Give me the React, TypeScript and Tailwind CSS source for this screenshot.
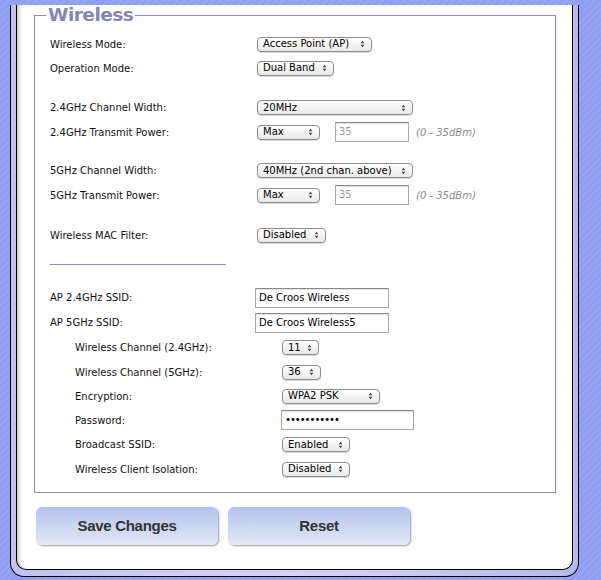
import React from 'react'

// Up/down arrows drawn on the right of a mac-style popup
function Arrows() {
  return (
    <svg width="5" height="8" viewBox="0 0 5 8" className="shrink-0">
      <path d="M2.5 0.8 L0.6 3.2 L4.4 3.2 Z" fill="#444" />
      <path d="M0.6 4.8 L4.4 4.8 L2.5 7.2 Z" fill="#444" />
    </svg>
  )
}

function Sel({ text, w }: { text: string; w: string }) {
  return (
    <div
      className={`flex h-[15px] ${w} shrink-0 items-center justify-between rounded-[4px] border border-[#8c8c8c] bg-gradient-to-b from-white to-[#e9e9e9] pl-[5px] pr-[6px] text-[10px] leading-none text-black shadow-[0_1px_0_#dcdcdc]`}
    >
      <span>{text}</span>
      <Arrows />
    </div>
  )
}

function Field({ value, w, dim, cls = '' }: { value: string; w: string; dim?: boolean; cls?: string }) {
  return (
    <div
      className={`flex h-[20px] ${w} ${cls} shrink-0 items-center border border-[#a8a8a8] border-t-[#8a8a8a] bg-white pl-[3px] text-[10px] leading-none shadow-[inset_0_1px_1px_#e2e2e2] ${dim ? 'text-[#9a9a9a]' : 'text-black'}`}
    >
      {value}
    </div>
  )
}

function Row({ label, h = 'h-[24px]', indent, children }: { label: string; h?: string; indent?: boolean; children: React.ReactNode }) {
  return (
    <div className={`flex ${h} items-center ${indent ? 'pl-[25px]' : ''}`}>
      <div className="w-[207px] shrink-0">{label}</div>
      {children}
    </div>
  )
}

function Power() {
  return (
    <div className="flex items-center">
      <Sel text="Max" w="w-[63px]" />
      <Field value="35" w="w-[74px]" dim cls="ml-[15px]" />
      <span className="ml-[7px] text-[10px] italic text-[#8a8a8a]">(0 - 35dBm)</span>
    </div>
  )
}

export default function App() {
  return (
    <div className="h-[580px] w-[601px] overflow-hidden bg-[#8e9ef0] bg-[repeating-linear-gradient(-45deg,#8e9ef0_0px,#8e9ef0_3px,#97a6f2_3px,#97a6f2_5px)] font-['DejaVu_Sans',sans-serif] text-[10px] text-[#111]">
      {/* Outer frame with lavender bevel */}
      <div className="ml-[10px] h-[572px] w-[569px] rounded-b-[14px] border border-t-0 border-black bg-gradient-to-r from-[#c2c2f2] via-[#d4d4fa] to-[#b8b8ec] px-[5px] pb-[6px]">
        <div className="h-full rounded-b-[10px] border border-t-0 border-black bg-white shadow-[inset_5px_0_4px_-3px_#c4c4c4]">
          <fieldset className="ml-[17px] mr-[16px] mt-[5px] border border-[#8c8cbc] pb-[11px] pl-[15px]">
            <legend className="-ml-[4px] px-[2px] text-[18.5px] font-bold leading-[20px] tracking-[-0.5px] text-[#8585b5]">Wireless</legend>

            <div className="pt-[7px]">
              <Row label="Wireless Mode:">
                <Sel text="Access Point (AP)" w="w-[115px]" />
              </Row>
              <Row label="Operation Mode:">
                <Sel text="Dual Band" w="w-[77px]" />
              </Row>

              <div className="h-[15px]" />
              <Row label="2.4GHz Channel Width:" h="h-[25px]">
                <Sel text="20MHz" w="w-[156px]" />
              </Row>
              <Row label="2.4GHz Transmit Power:">
                <Power />
              </Row>

              <div className="h-[14px]" />
              <Row label="5GHz Channel Width:" h="h-[25px]">
                <Sel text="40MHz (2nd chan. above)" w="w-[156px]" />
              </Row>
              <Row label="5GHz Transmit Power:">
                <Power />
              </Row>

              <div className="h-[16px]" />
              <Row label="Wireless MAC Filter:">
                <Sel text="Disabled" w="w-[69px]" />
              </Row>

              <div className="mt-[17px] h-px w-[176px] bg-[#8c8cbc]" />

              <div className="h-[20px]" />
              <Row label="AP 2.4GHz SSID:" h="h-[25px]">
                <Field value="De Croos Wireless" w="w-[134px]" cls="-ml-[2px]" />
              </Row>
              <Row label="AP 5GHz SSID:" h="h-[25px]">
                <Field value="De Croos Wireless5" w="w-[134px]" cls="-ml-[2px]" />
              </Row>
              <Row label="Wireless Channel (2.4GHz):" h="h-[25px]" indent>
                <Sel text="11" w="w-[37px]" />
              </Row>
              <Row label="Wireless Channel (5GHz):" indent>
                <Sel text="36" w="w-[39px]" />
              </Row>
              <Row label="Encryption:" indent>
                <Sel text="WPA2 PSK" w="w-[98px]" />
              </Row>
              <Row label="Password:" indent>
                <Field value="•••••••••••" w="w-[133px]" cls="-ml-[1px] tracking-[-1px]" />
              </Row>
              <Row label="Broadcast SSID:" h="h-[25px]" indent>
                <Sel text="Enabled" w="w-[68px]" />
              </Row>
              <Row label="Wireless Client Isolation:" indent>
                <Sel text="Disabled" w="w-[68px]" />
              </Row>
            </div>
          </fieldset>

          {/* Action buttons */}
          <div className="ml-[19px] mt-[14px] flex gap-[10px]">
            {['Save Changes', 'Reset'].map((t) => (
              <button
                key={t}
                className="h-[38px] w-[182px] rounded-[6px] bg-gradient-to-b from-[#b4c2ef] to-[#e4e7f3] font-['Liberation_Sans',sans-serif] text-[15px] font-bold tracking-[-0.3px] text-[#333] shadow-[1px_1px_2px_#9a9a9a]"
              >
                {t}
              </button>
            ))}
          </div>
        </div>
      </div>
    </div>
  )
}
